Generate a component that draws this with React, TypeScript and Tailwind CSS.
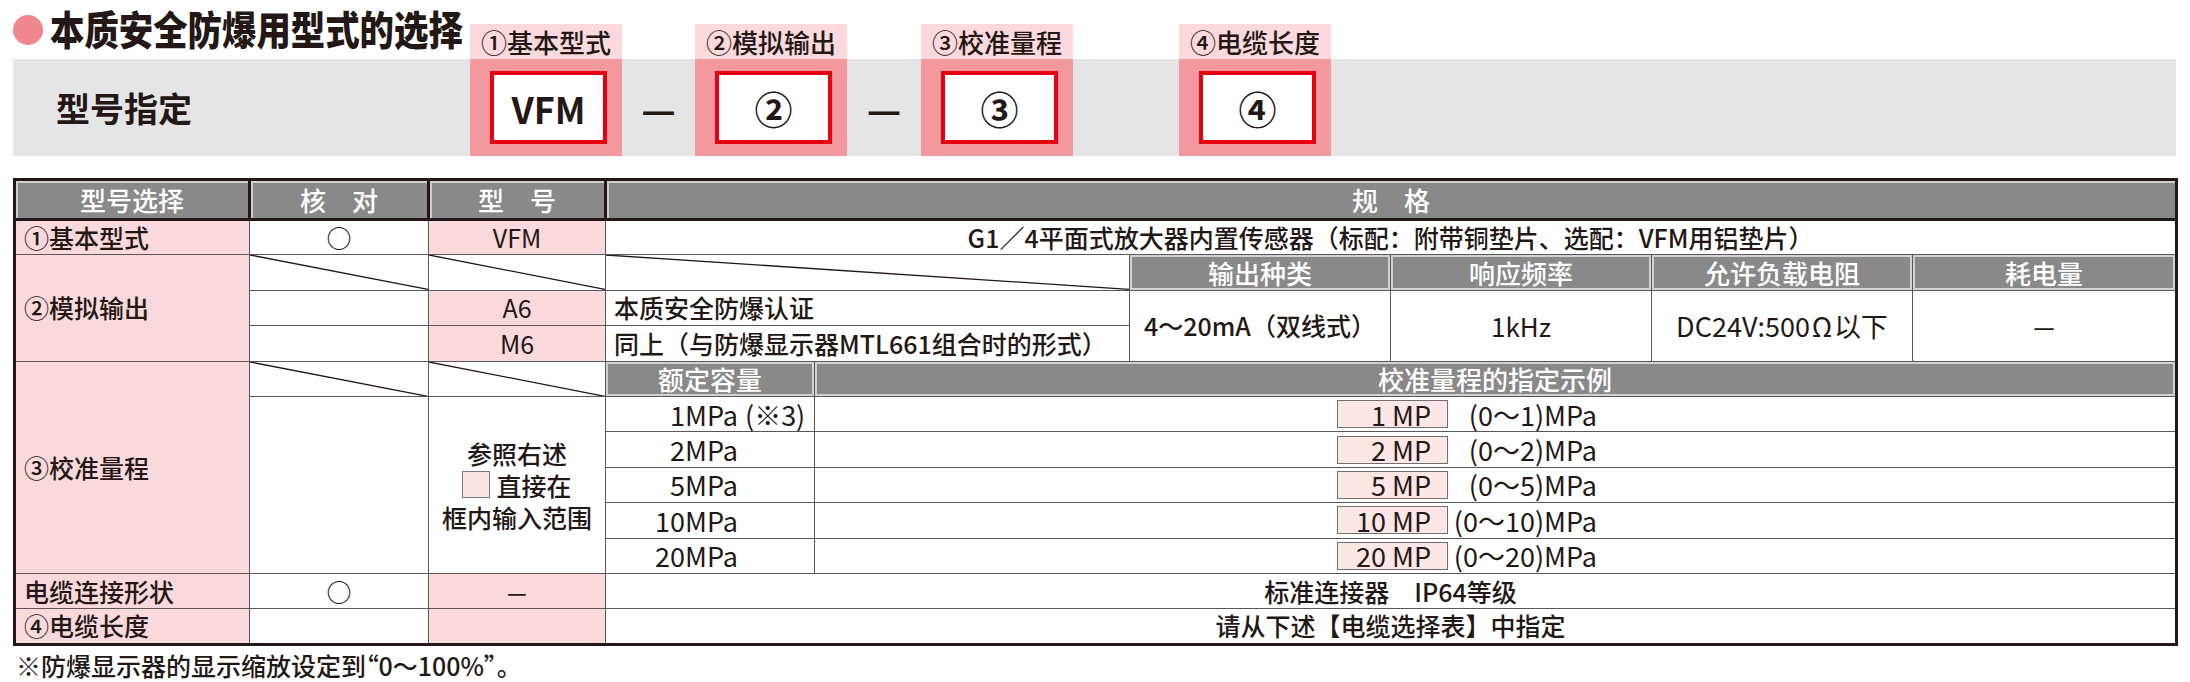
import React from "react";

const cell = "border border-[#595757] p-0 align-middle";
const pink = "bg-[#fad9dc]";
const hdr =
  "border-[3px] border-[#231815] bg-[#898989] p-0 text-center align-middle text-[26px] text-white shadow-[inset_2px_2px_0_#cfcfcf]";
const sub =
  "border border-[#595757] bg-[#898989] p-0 text-center align-middle text-[26px] text-white shadow-[inset_0_0_0_2px_#d2d2d2]";

function Diag() {
  return (
    <svg className="absolute inset-0 h-full w-full" preserveAspectRatio="none">
      <line x1="0" y1="0" x2="100%" y2="100%" stroke="#231815" strokeWidth="1.3" />
    </svg>
  );
}

function Box({ children }: { children: React.ReactNode }) {
  return (
    <div className="flex w-[152px] items-center bg-[#f3999e]">
      <div className="ml-[20px] flex h-[73px] w-[117px] items-center justify-center border-[4px] border-[#e60012] bg-white font-bold">
        {children}
      </div>
    </div>
  );
}

const ranges = [
  { cap: "1MPa", note: "(※3)", n: "1", r: "(0～1)MPa" },
  { cap: "2MPa", note: "", n: "2", r: "(0～2)MPa" },
  { cap: "5MPa", note: "", n: "5", r: "(0～5)MPa" },
  { cap: "10MPa", note: "", n: "10", r: "(0～10)MPa" },
  { cap: "20MPa", note: "", n: "20", r: "(0～20)MPa" },
];

export default function App() {
  return (
    <div className="h-[682px] w-[2190px] overflow-hidden bg-white font-['Noto_Sans_CJK_SC',sans-serif] font-medium text-[#231815]">
      {/* title + tabs */}
      <div className="flex h-[59px]">
        <div className="flex w-[470px] items-start gap-[7px] pl-[13px] pt-[7px]">
          <div className="mt-[8px] h-[30px] w-[30px] shrink-0 rounded-full bg-[#f0868e]" />
          <div className="origin-left scale-x-[0.86] text-[40px] leading-[42px] font-black whitespace-nowrap">
            本质安全防爆用型式的选择
          </div>
        </div>
        <div className="mt-[24px] flex h-[35px] w-[152px] items-center justify-center bg-[#fbd9dc] text-[26px]">①基本型式</div>
        <div className="w-[73px]" />
        <div className="mt-[24px] flex h-[35px] w-[152px] items-center justify-center bg-[#fbd9dc] text-[26px]">②模拟输出</div>
        <div className="w-[74px]" />
        <div className="mt-[24px] flex h-[35px] w-[152px] items-center justify-center bg-[#fbd9dc] text-[26px]">③校准量程</div>
        <div className="w-[106px]" />
        <div className="mt-[24px] flex h-[35px] w-[152px] items-center justify-center bg-[#fbd9dc] text-[26px]">④电缆长度</div>
      </div>

      {/* model band */}
      <div className="ml-[13px] flex h-[97px] w-[2163px] bg-[#e5e5e5]">
        <div className="flex w-[457px] items-center pl-[43px] text-[34px] font-bold">型号指定</div>
        <Box><span className="text-[36px]">VFM</span></Box>
        <div className="flex w-[73px] items-center justify-center text-[38px] font-bold">—</div>
        <Box><span className="text-[38px]">②</span></Box>
        <div className="flex w-[74px] items-center justify-center text-[38px] font-bold">—</div>
        <Box><span className="text-[38px]">③</span></Box>
        <div className="w-[106px]" />
        <Box><span className="text-[38px]">④</span></Box>
      </div>

      {/* table */}
      <table className="mt-[22px] ml-[13px] w-[2163px] table-fixed border-collapse border-[3px] border-[#231815] text-[25px] leading-none">
        <colgroup>
          <col className="w-[235px]" />
          <col className="w-[179px]" />
          <col className="w-[177px]" />
          <col className="w-[209px]" />
          <col className="w-[315px]" />
          <col className="w-[261px]" />
          <col className="w-[261px]" />
          <col className="w-[261px]" />
          <col className="w-[264px]" />
        </colgroup>
        <tbody>
          <tr className="h-[40px]">
            <td className={hdr}>型号选择</td>
            <td className={hdr}>核　对</td>
            <td className={hdr}>型　号</td>
            <td colSpan={6} className={hdr}>规　格</td>
          </tr>

          <tr className="h-[35.4px]">
            <td className={`${cell} ${pink} pl-[8px]`}>①基本型式</td>
            <td className={`${cell} text-center`}>○</td>
            <td className={`${cell} ${pink} text-center font-normal`}>VFM</td>
            <td colSpan={6} className={`${cell} text-center`}>
              G1／4平面式放大器内置传感器（标配：附带铜垫片、选配：VFM用铝垫片）
            </td>
          </tr>

          <tr className="h-[35.4px]">
            <td rowSpan={3} className={`${cell} ${pink} pl-[8px]`}>②模拟输出</td>
            <td className={`${cell} relative`}><Diag /></td>
            <td className={`${cell} relative`}><Diag /></td>
            <td colSpan={2} className={`${cell} relative`}><Diag /></td>
            <td className={sub}>输出种类</td>
            <td className={sub}>响应频率</td>
            <td className={sub}>允许负载电阻</td>
            <td className={sub}>耗电量</td>
          </tr>
          <tr className="h-[35.4px]">
            <td className={cell} />
            <td className={`${cell} ${pink} text-center font-normal`}>A6</td>
            <td colSpan={2} className={`${cell} pl-[8px]`}>本质安全防爆认证</td>
            <td rowSpan={2} className={`${cell} text-center`}>4～20mA（双线式）</td>
            <td rowSpan={2} className={`${cell} text-center text-[26px] font-normal`}>1kHz</td>
            <td rowSpan={2} className={`${cell} text-center text-[27px] font-normal`}>
              DC24V:500<span className="inline-block w-[24px] text-center">Ω</span>以下
            </td>
            <td rowSpan={2} className={`${cell} text-center text-[24px]`}>—</td>
          </tr>
          <tr className="h-[35.4px]">
            <td className={cell} />
            <td className={`${cell} ${pink} text-center font-normal`}>M6</td>
            <td colSpan={2} className={`${cell} pl-[8px]`}>同上（与防爆显示器MTL661组合时的形式）</td>
          </tr>

          <tr className="h-[35.4px]">
            <td rowSpan={6} className={`${cell} ${pink} pl-[8px]`}>③校准量程</td>
            <td className={`${cell} relative`}><Diag /></td>
            <td className={`${cell} relative`}><Diag /></td>
            <td className={sub}>额定容量</td>
            <td colSpan={5} className={sub}>校准量程的指定示例</td>
          </tr>
          {ranges.map((r, i) => (
            <tr key={r.cap} className="h-[35.4px]">
              {i === 0 && <td rowSpan={5} className={cell} />}
              {i === 0 && (
                <td rowSpan={5} className={`${cell} text-center leading-[32px]`}>
                  <div>参照右述</div>
                  <div className="flex items-center justify-center">
                    <span className="mr-[6px] inline-block h-[27px] w-[28px] border-[1.5px] border-[#7a7a7a] bg-[#fbe3e3]" />
                    直接在
                  </div>
                  <div>框内输入范围</div>
                </td>
              )}
              <td className={`${cell} text-[27px] font-normal`}>
                <div className="flex">
                  <span className="w-[132px] text-right">{r.cap}</span>
                  {r.note && <span className="ml-[7px]">{r.note}</span>}
                </div>
              </td>
              <td colSpan={5} className={`${cell} text-[27px] font-normal`}>
                <div className="flex items-center pl-[522px]">
                  <div className="flex h-[28px] w-[111px] items-center justify-end border-[1.5px] border-[#707070] bg-[#fde6e6] pr-[16px]">
                    {r.n} MP
                  </div>
                  <span className="w-[149px] text-right">{r.r}</span>
                </div>
              </td>
            </tr>
          ))}

          <tr className="h-[35.4px]">
            <td className={`${cell} ${pink} pl-[8px]`}>电缆连接形状</td>
            <td className={`${cell} text-center`}>○</td>
            <td className={`${cell} ${pink} text-center text-[22px]`}>—</td>
            <td colSpan={6} className={`${cell} text-center`}>标准连接器　IP64等级</td>
          </tr>
          <tr className="h-[35.4px]">
            <td className={`${cell} ${pink} pl-[8px]`}>④电缆长度</td>
            <td className={cell} />
            <td className={`${cell} ${pink}`} />
            <td colSpan={6} className={`${cell} text-center`}>请从下述【电缆选择表】中指定</td>
          </tr>
        </tbody>
      </table>

      <p className="mt-[4px] ml-[16px] text-[25px] leading-[30px] [font-feature-settings:'palt']">
        ※防爆显示器的显示缩放设定到“0～100%”。
      </p>
    </div>
  );
}
